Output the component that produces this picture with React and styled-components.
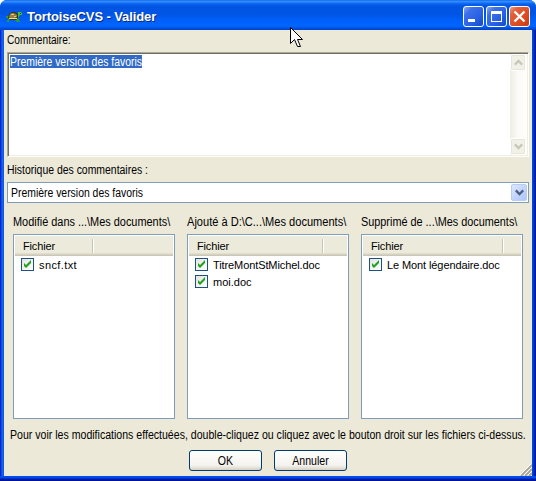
import React from "react";
import styled, { createGlobalStyle } from "styled-components";

const Global = createGlobalStyle`
  * { box-sizing: border-box; }
  body { margin: 0; overflow: hidden; background: #fff; }
`;

const Window = styled.div`
  position: relative;
  width: 536px;
  height: 481px;
  display: flex;
  flex-direction: column;
  overflow: hidden;
  border-radius: 7px 7px 0 0;
  background: #0a4be0;
  font: 12px/14px "Liberation Sans", Arial, sans-serif;
  color: #000;
`;

const TitleBar = styled.header`
  height: 30px;
  flex: none;
  display: flex;
  align-items: center;
  padding: 3px 6px 0 6px;
  background: linear-gradient(180deg, #0058e8 0, #3a93ff 1px, #2a86ff 2px, #0860ee 4px, #0054e0 7px, #0055e5 14px, #0060fa 21px, #0066ff 26px, #0052e0 28px, #0040c8 30px);
`;

const Title = styled.h1`
  flex: 1;
  margin: 0 0 0 4px;
  font: bold 13px/18px "Liberation Sans", Arial, sans-serif;
  letter-spacing: -0.1px;
  color: #fff;
  text-shadow: 1px 1px 0 #0a2a80;
  white-space: pre;
`;

const CaptionButtons = styled.div`
  display: flex;
  gap: 2px;
`;

const CaptionButton = styled.button`
  width: 21px;
  height: 21px;
  padding: 0;
  border: 1px solid #fff;
  border-radius: 3px;
  background: ${(p) =>
    p.$close
      ? "linear-gradient(135deg, #f0a088 0, #e4613c 22%, #dd4a20 65%, #c83a10 100%)"
      : "linear-gradient(135deg, #86a8f4 0, #3c70e8 25%, #2860e4 65%, #1648c0 100%)"};
  svg { display: block; }
`;

const Frame = styled.div`
  flex: 1;
  display: flex;
  padding: 0 4px 5px;
  background:
    linear-gradient(0deg, #00108c 0, #0020b0 2px, #0046e8 3px, #0050ee 5px, transparent 5px),
    linear-gradient(90deg, #0019cf 0, #0831d9 1px, #166aee 2px, #0855dd 4px, transparent 4px, transparent 532px, #0050ee 532px, #0040d8 533px, #0020a8 535px, #00138c 536px);
`;

const Client = styled.main`
  position: relative;
  flex: 1;
  min-width: 0;
  display: flex;
  flex-direction: column;
  padding: 3px 3px 0;
  background: #ece9d8;
`;

/* Condensed dialog text: $stretch is the horizontal glyph scale. */
const Label = styled.div`
  height: 14px;
  flex: none;
  transform: scaleX(${(p) => p.$stretch});
  transform-origin: 0 50%;
  white-space: pre;
`;

const HistoryLabel = styled(Label)`
  margin-top: 6px;
`;

const CommentBox = styled.div`
  height: 105px;
  flex: none;
  margin-top: 5px;
  display: flex;
  justify-content: space-between;
  border: 1px solid;
  border-color: #aca899 #fff #fff #aca899;
  box-shadow: inset 1px 1px #716f64, inset -1px -1px #f1efe2;
  padding: 1px;
  background: #fff;
`;

const Selection = styled.span`
  height: 13px;
  margin: 1px 0 0 1px;
  line-height: 14px;
  transform: scaleX(0.868);
  transform-origin: 0 50%;
  background: #316ac5;
  color: #fff;
  white-space: pre;
`;

const Scrollbar = styled.div`
  width: 17px;
  display: flex;
  flex-direction: column;
  justify-content: space-between;
  background: linear-gradient(90deg, #eeede5, #fbfaf6 45%, #fefefb);
`;

const ScrollButton = styled.div`
  width: 16px;
  height: 17px;
  display: flex;
  align-items: center;
  justify-content: center;
  border: 1px solid #fff;
  border-radius: 2px;
  box-shadow: inset 0 0 0 1px #e8e6dc;
  background: #f2f1e8;
`;

const Combo = styled.div`
  height: 21px;
  flex: none;
  margin-top: 5px;
  display: flex;
  align-items: center;
  justify-content: space-between;
  border: 1px solid #7f9db9;
  padding: 1px 1px 1px 3px;
  background: #fff;
`;

const ComboButton = styled.div`
  width: 16px;
  height: 17px;
  display: flex;
  align-items: center;
  justify-content: center;
  border: 1px solid #b8cbf4;
  border-radius: 2px;
  background: linear-gradient(135deg, #dce8fe, #c3d5fd 50%, #aec6f8);
`;

const Panels = styled.div`
  display: grid;
  grid-template-columns: repeat(3, 162px);
  column-gap: 12px;
  margin: 12px 0 0 6px;
`;

const FileList = styled.div`
  height: 185px;
  margin-top: 5px;
  border: 1px solid #7f9db9;
  padding: 1px;
  background: #fff;
`;

const ListHeader = styled.div`
  height: 20px;
  display: flex;
  align-items: center;
  background: linear-gradient(180deg, #ebeadb 0 17px, #e2decd 17px 18px, #d6d2c2 18px 19px, #cbc7b8 19px);
`;

const HeaderCell = styled.div`
  width: ${(p) => p.$width}px;
  height: 14px;
  margin-bottom: 1px;
  padding-left: 8px;
  border-right: 1px solid #c7c5b2;
  box-shadow: 1px 0 #fff;
  font-size: 11px;
  letter-spacing: -0.15px;
  line-height: 15px;
`;

const Row = styled.div`
  height: 17px;
  display: flex;
  align-items: center;
  gap: 5px;
  padding-left: 6px;
`;

const FileName = styled.span`
  font-size: 11px;
  letter-spacing: ${(p) => p.$spacing}px;
  white-space: pre;
`;

const Check = styled.span`
  width: 13px;
  height: 13px;
  border: 1px solid #1c5180;
  background: linear-gradient(135deg, #e4e4de, #fff);
  svg { display: block; }
`;

const Hint = styled(Label)`
  margin: 9px 0 0 3px;
`;

const Actions = styled.div`
  display: flex;
  gap: 12px;
  margin: 8px 0 0 182px;
`;

const Button = styled.button`
  width: 73px;
  height: 21px;
  padding: 0;
  border: 1px solid #003c74;
  border-radius: 3px;
  background: linear-gradient(180deg, #fff, #f4f3ee 75%, #e2dfd3 90%, #d6d0c5);
  font: inherit;
  line-height: 20px;
  color: #000;
`;

const ButtonText = styled.span`
  display: block;
  transform: scaleX(0.88);
`;

const Grip = styled.svg`
  position: absolute;
  right: 0;
  bottom: 0;
`;

const Pointer = styled.svg`
  position: absolute;
  left: 290px;
  top: 27px;
`;

const Chevron = ({ up, color }) => (
  <svg width="9" height="7" viewBox="0 0 9 7">
    <path d={up ? "M.8 5.6 4.5 1.9 8.2 5.6" : "M.8 1.4 4.5 5.1 8.2 1.4"} fill="none" stroke={color} strokeWidth="2.3" />
  </svg>
);

const Turtle = () => (
  <svg width="17" height="16" viewBox="0 0 17 16">
    <path d="M0 7h3v2h1v2H3v2H1v-2h1V9H0zM9 9h4v2l1 2h-3l-2-2z" fill="#2c9c35" />
    <path d="M10 8l2-3V3h3l1 1v2h-2l-3 4H9z" fill="#3fc03a" />
    <path d="M2 9l1-4 3-2h3l3 2v4l-2 2H4z" fill="#3b3a12" />
    <path d="M3 8l1-3 2-1h2l3 2v2l-2 1H4z" fill="#96813f" />
    <path d="M5 5h3v1H5zM8 7h2v1H8z" fill="#d9c68c" />
    <path d="M3 9h8v1H3z" fill="#e6dca0" />
    <path d="M14 4h1v1h-1z" fill="#083808" />
  </svg>
);

const groups = [
  { title: "Modifié dans ...\\Mes documents\\", stretch: 0.91, column: 78, files: [["sncf.txt", 0.4]] },
  { title: "Ajouté à D:\\C...\\Mes documents\\", stretch: 0.922, column: 134, files: [["TitreMontStMichel.doc", -0.1], ["moi.doc", 0]] },
  { title: "Supprimé de ...\\Mes documents\\", stretch: 0.905, column: 140, files: [["Le Mont légendaire.doc", -0.1]] },
];

export default function App() {
  return (
    <Window>
      <Global />
      <TitleBar>
        <Turtle />
        <Title>TortoiseCVS - Valider</Title>
        <CaptionButtons>
          <CaptionButton aria-label="Réduire">
            <svg width="19" height="19"><path d="M4 12h7v3H4z" fill="#fff" /></svg>
          </CaptionButton>
          <CaptionButton aria-label="Agrandir">
            <svg width="19" height="19"><path d="M4 4h11v11H4zM5 7v7h9V7z" fill="#fff" fillRule="evenodd" /></svg>
          </CaptionButton>
          <CaptionButton $close aria-label="Fermer">
            <svg width="19" height="19"><path d="M4.5 4.5l10 10M14.5 4.5l-10 10" stroke="#fff" strokeWidth="2.4" /></svg>
          </CaptionButton>
        </CaptionButtons>
      </TitleBar>
      <Frame>
        <Client>
          <Label $stretch={0.845}>Commentaire:</Label>
          <CommentBox>
            <Selection>Première version des favoris</Selection>
            <Scrollbar>
              <ScrollButton><Chevron up color="#c9c7ba" /></ScrollButton>
              <ScrollButton><Chevron color="#c9c7ba" /></ScrollButton>
            </Scrollbar>
          </CommentBox>
          <HistoryLabel $stretch={0.87}>Historique des commentaires :</HistoryLabel>
          <Combo>
            <Label $stretch={0.868}>Première version des favoris</Label>
            <ComboButton><Chevron color="#4d6185" /></ComboButton>
          </Combo>
          <Panels>
            {groups.map((g) => (
              <section key={g.title}>
                <Label $stretch={g.stretch}>{g.title}</Label>
                <FileList>
                  <ListHeader><HeaderCell $width={g.column}>Fichier</HeaderCell></ListHeader>
                  {g.files.map(([name, spacing]) => (
                    <Row key={name}>
                      <Check><svg width="11" height="11"><path d="M2 4v3l2 2 5-5V1L4 6z" fill="#21a121" /></svg></Check>
                      <FileName $spacing={spacing}>{name}</FileName>
                    </Row>
                  ))}
                </FileList>
              </section>
            ))}
          </Panels>
          <Hint $stretch={0.881}>Pour voir les modifications effectuées, double-cliquez ou cliquez avec le bouton droit sur les fichiers ci-dessus.</Hint>
          <Actions>
            <Button><ButtonText>OK</ButtonText></Button>
            <Button><ButtonText>Annuler</ButtonText></Button>
          </Actions>
          <Grip width="12" height="12">
            <path d="M1 12 12 1M5 12l7-7M9 12l3-3" stroke="#aca899" strokeWidth="2" />
            <path d="M0 11 11 0M4 11l8-8M8 11l4-4" stroke="#fff" />
          </Grip>
        </Client>
      </Frame>
      <Pointer width="13" height="22">
        <path d="M.5.5v16l4-4 3 7h3l-3-7h5z" fill="#fff" stroke="#000" />
      </Pointer>
    </Window>
  );
}
